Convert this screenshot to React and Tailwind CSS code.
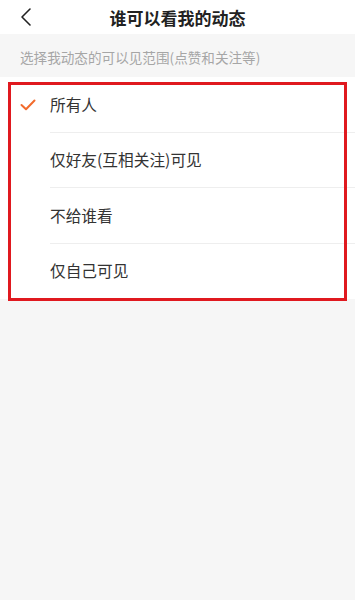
import React from "react";

const font = { fontFamily: '"Noto Sans CJK SC", "Noto Sans", sans-serif' };

export default function App() {
  const items = ["所有人", "仅好友(互相关注)可见", "不给谁看", "仅自己可见"];
  return (
    <div className="w-[355px] h-[600px] bg-[#f6f6f6] flex flex-col" style={font}>
      <div className="h-[34px] bg-white flex items-center relative shrink-0">
        <div className="w-[50px] flex items-center pl-[19px]">
          <svg width="14" height="20" viewBox="0 0 14 20" fill="none">
            <path d="M11 2 L3 10 L11 18" stroke="#222" strokeWidth="1.6" strokeLinecap="round" strokeLinejoin="round" />
          </svg>
        </div>
        <div className="flex-1 text-center pr-[50px] text-[17px] font-bold text-[#222] leading-none">
          谁可以看我的动态
        </div>
      </div>
      <div className="h-[43px] flex items-center pl-[20px] pt-[4px] text-[13.6px] text-[#a6a6a6] shrink-0">
        选择我动态的可以见范围(点赞和关注等)
      </div>
      <div className="bg-white relative flex flex-col">
        {items.map((t, i) => (
          <div key={t} className="h-[55.5px] flex items-center relative">
            <div className="w-[50px] flex items-center pl-[20px]">
              {i === 0 && (
                <svg width="16" height="12" viewBox="0 0 16 12" fill="none">
                  <path d="M1.5 6 L6 10.2 L14.5 1.5" stroke="#f26b2c" strokeWidth="2" strokeLinecap="round" strokeLinejoin="round" />
                </svg>
              )}
            </div>
            <div className="text-[15.7px] text-[#333]">{t}</div>
            {i < items.length - 1 && (
              <div className="absolute left-[50px] right-0 bottom-0 h-px bg-[#eeeeee]" />
            )}
          </div>
        ))}
        <div className="absolute left-[8px] right-[8px] top-[5px] bottom-[-2px] border-[3px] border-[#e0191f] pointer-events-none" />
      </div>
    </div>
  );
}
